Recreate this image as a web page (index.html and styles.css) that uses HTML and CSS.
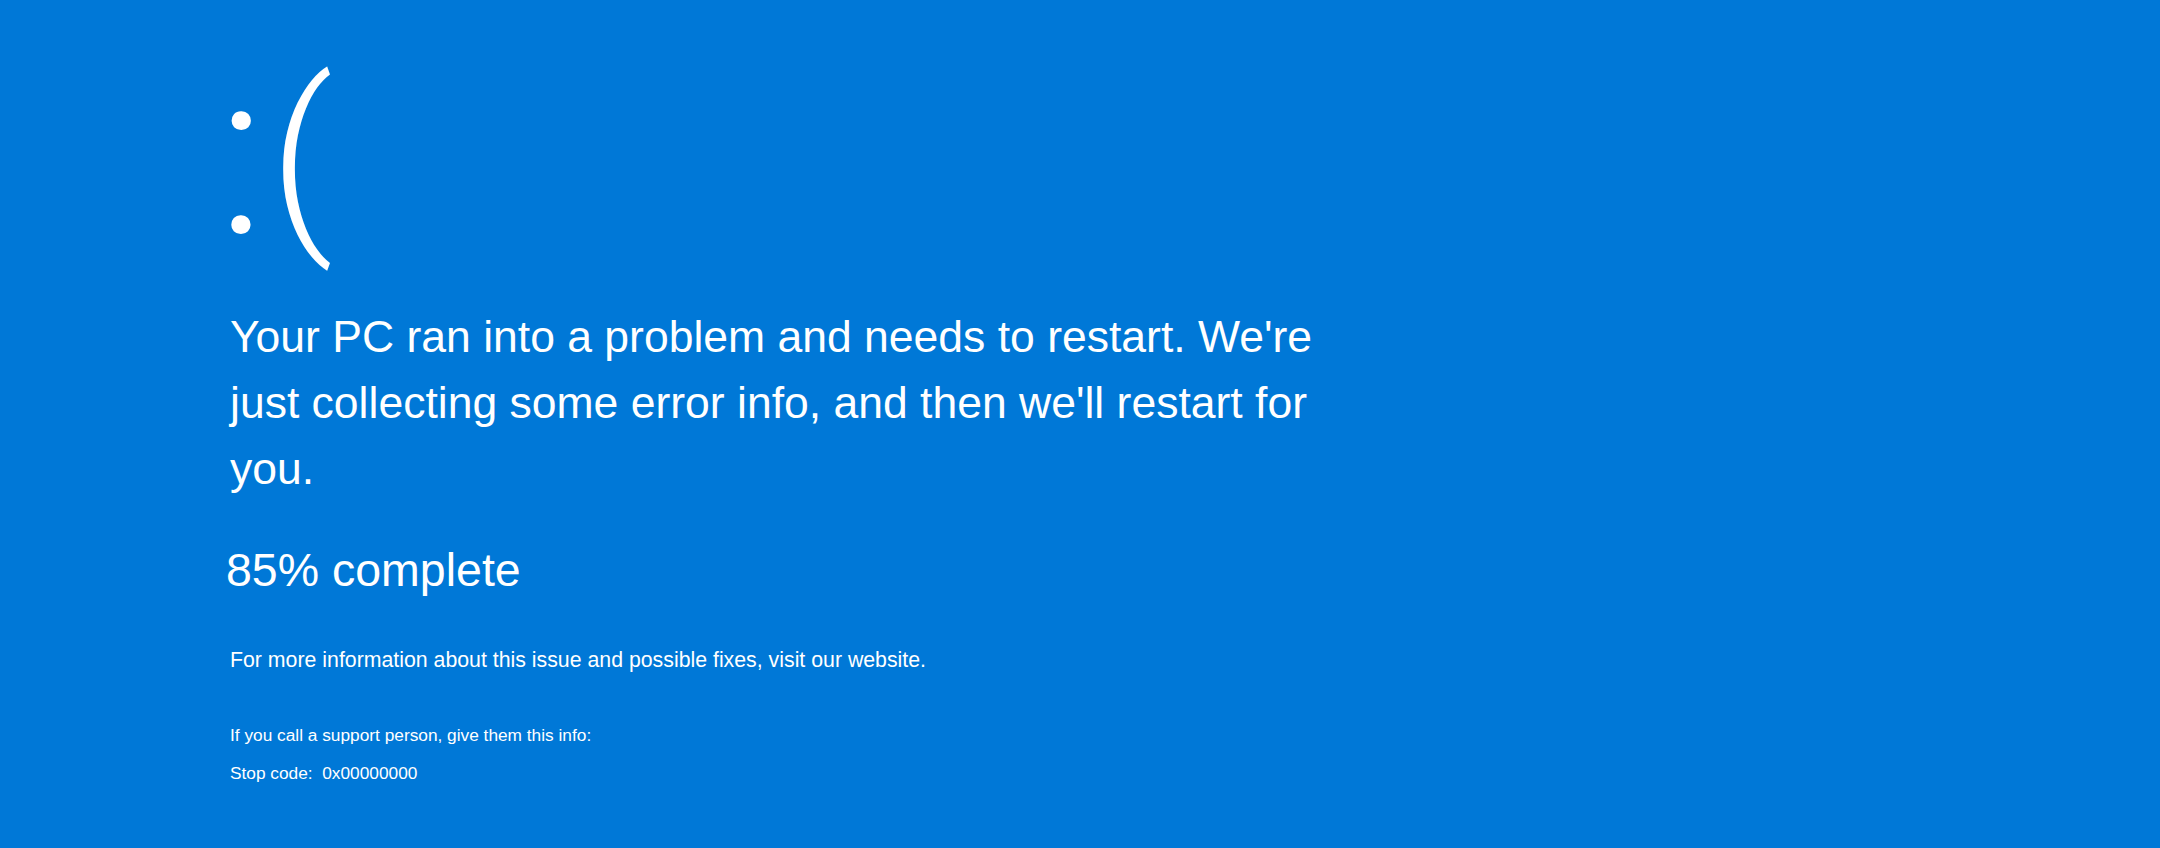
FILE: index.html
```html
<!DOCTYPE html>
<html lang="en">

<head>
  <meta name="viewport" content="width=device-width, initial-scale=1">
  <link rel="stylesheet" href="styles.css">
  <title>Stop screen</title>
</head>

<body>
  <main id="bsod_div">
    <div class="face"><span class="face_colon">:</span><span class="face_paren">(</span></div>
    <p class="message">Your PC ran into a problem and needs to restart. We're just collecting some error info, and then we'll restart for you.</p>
    <p class="progress">85% complete</p>
    <p class="more_info">For more information about this issue and possible fixes, visit our website.</p>
    <div class="support">
      <p>If you call a support person, give them this info:</p>
      <p>Stop code:&nbsp; 0x00000000</p>
    </div>
  </main>
</body>

</html>
```

FILE: styles.css
```css
body {
  background-color: rgb(0, 120, 215);
  color: white;
  margin: 0px;
  font-family: "Liberation Sans", Arial, sans-serif;
}

p {
  margin: 0px;
}

#bsod_div {
  height: 100vh;
  padding: 0px 0px 0px 230px;
  box-sizing: border-box;
  overflow: hidden;
}

/* the sad face, built from a colon and a bracket */
.face {
  font-family: Roboto, sans-serif;
  font-weight: 300;
  font-size: 199px;
  line-height: 200px;
  height: 200px;
  margin-top: 57px;
  margin-bottom: 47px;
  white-space: nowrap;
}

.face_colon {
  font-size: 231px;
  line-height: 0px;
  margin-left: -13px;
  vertical-align: -8px;
}

.face_paren {
  margin-left: 4px;
  font-weight: 350;
}

.message {
  width: 1130px;
  font-size: 44.5px;
  line-height: 66px;
}

.progress {
  font-size: 46.5px;
  line-height: 53px;
  margin-top: 42px;
  margin-left: -4px;
}

.more_info {
  font-size: 21.3px;
  line-height: 24px;
  margin-top: 51px;
}

.support {
  margin-top: 44px;
  font-size: 17.3px;
  line-height: 38px;
}
```
